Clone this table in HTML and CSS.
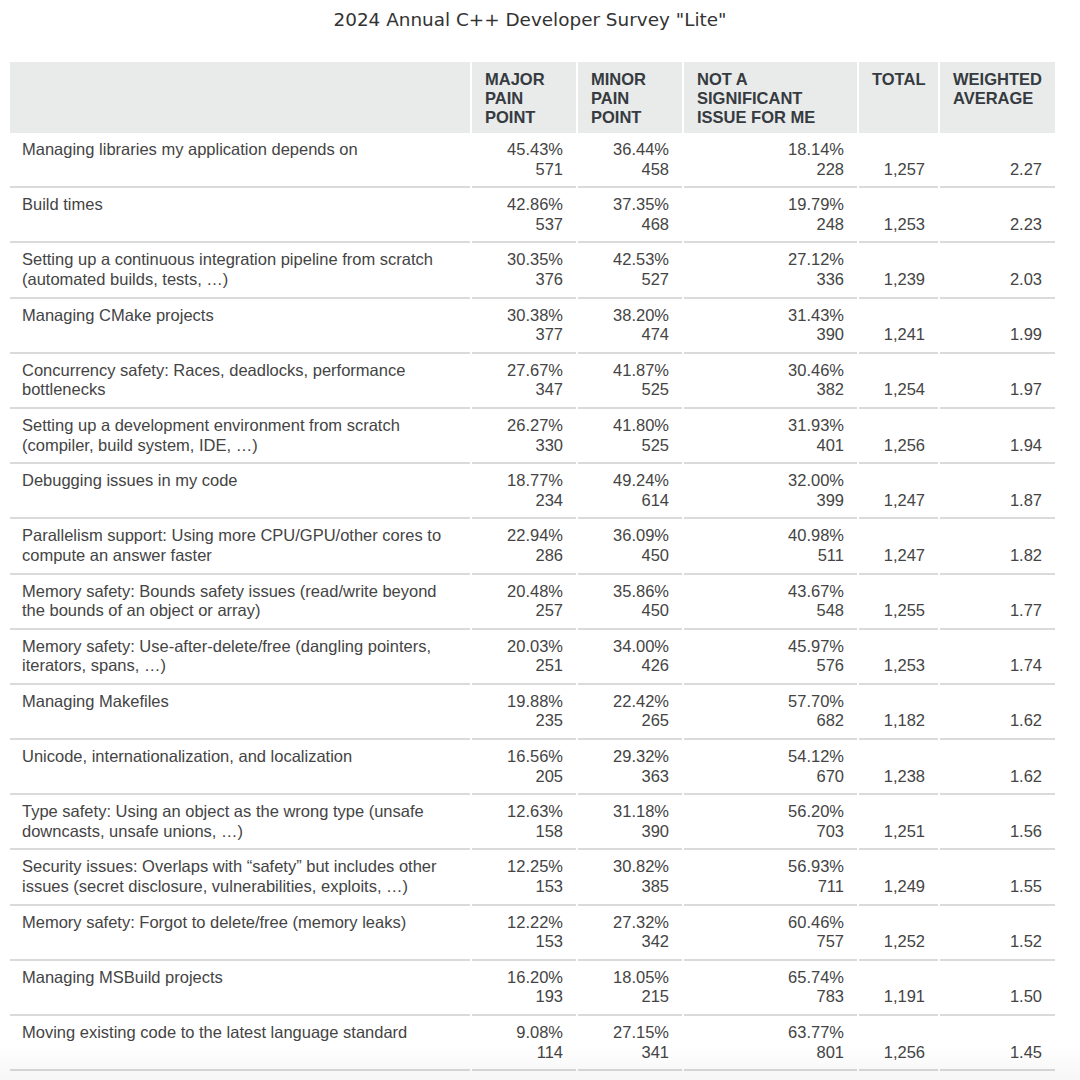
FILE: index.html
```html
<!DOCTYPE html>
<html lang="en">
<head>
<meta charset="utf-8">
<title>2024 Annual C++ Developer Survey "Lite"</title>
<link rel="stylesheet" href="styles.css">
</head>
<body>
<div class="title">2024 Annual C++ Developer Survey "Lite"</div>
<table class="survey">
  <colgroup>
    <col class="c-label">
    <col class="c-major">
    <col class="c-minor">
    <col class="c-not">
    <col class="c-total">
    <col class="c-avg">
  </colgroup>
  <thead>
    <tr>
      <th></th>
      <th>MAJOR PAIN POINT</th>
      <th>MINOR PAIN POINT</th>
      <th>NOT A SIGNIFICANT ISSUE FOR ME</th>
      <th>TOTAL</th>
      <th>WEIGHTED AVERAGE</th>
    </tr>
  </thead>
  <tbody>
    <tr><td class="label">Managing libraries my application depends on</td><td class="num"><span>45.43%</span><span>571</span></td><td class="num"><span>36.44%</span><span>458</span></td><td class="num"><span>18.14%</span><span>228</span></td><td class="tot">1,257</td><td class="tot">2.27</td></tr>
    <tr><td class="label">Build times</td><td class="num"><span>42.86%</span><span>537</span></td><td class="num"><span>37.35%</span><span>468</span></td><td class="num"><span>19.79%</span><span>248</span></td><td class="tot">1,253</td><td class="tot">2.23</td></tr>
    <tr><td class="label">Setting up a continuous integration pipeline from scratch (automated builds, tests, …)</td><td class="num"><span>30.35%</span><span>376</span></td><td class="num"><span>42.53%</span><span>527</span></td><td class="num"><span>27.12%</span><span>336</span></td><td class="tot">1,239</td><td class="tot">2.03</td></tr>
    <tr><td class="label">Managing CMake projects</td><td class="num"><span>30.38%</span><span>377</span></td><td class="num"><span>38.20%</span><span>474</span></td><td class="num"><span>31.43%</span><span>390</span></td><td class="tot">1,241</td><td class="tot">1.99</td></tr>
    <tr><td class="label">Concurrency safety: Races, deadlocks, performance bottlenecks</td><td class="num"><span>27.67%</span><span>347</span></td><td class="num"><span>41.87%</span><span>525</span></td><td class="num"><span>30.46%</span><span>382</span></td><td class="tot">1,254</td><td class="tot">1.97</td></tr>
    <tr><td class="label">Setting up a development environment from scratch (compiler, build system, IDE, …)</td><td class="num"><span>26.27%</span><span>330</span></td><td class="num"><span>41.80%</span><span>525</span></td><td class="num"><span>31.93%</span><span>401</span></td><td class="tot">1,256</td><td class="tot">1.94</td></tr>
    <tr><td class="label">Debugging issues in my code</td><td class="num"><span>18.77%</span><span>234</span></td><td class="num"><span>49.24%</span><span>614</span></td><td class="num"><span>32.00%</span><span>399</span></td><td class="tot">1,247</td><td class="tot">1.87</td></tr>
    <tr><td class="label">Parallelism support: Using more CPU/GPU/other cores to compute an answer faster</td><td class="num"><span>22.94%</span><span>286</span></td><td class="num"><span>36.09%</span><span>450</span></td><td class="num"><span>40.98%</span><span>511</span></td><td class="tot">1,247</td><td class="tot">1.82</td></tr>
    <tr><td class="label">Memory safety: Bounds safety issues (read/write beyond the bounds of an object or array)</td><td class="num"><span>20.48%</span><span>257</span></td><td class="num"><span>35.86%</span><span>450</span></td><td class="num"><span>43.67%</span><span>548</span></td><td class="tot">1,255</td><td class="tot">1.77</td></tr>
    <tr><td class="label">Memory safety: Use-after-delete/free (dangling pointers, iterators, spans, …)</td><td class="num"><span>20.03%</span><span>251</span></td><td class="num"><span>34.00%</span><span>426</span></td><td class="num"><span>45.97%</span><span>576</span></td><td class="tot">1,253</td><td class="tot">1.74</td></tr>
    <tr><td class="label">Managing Makefiles</td><td class="num"><span>19.88%</span><span>235</span></td><td class="num"><span>22.42%</span><span>265</span></td><td class="num"><span>57.70%</span><span>682</span></td><td class="tot">1,182</td><td class="tot">1.62</td></tr>
    <tr><td class="label">Unicode, internationalization, and localization</td><td class="num"><span>16.56%</span><span>205</span></td><td class="num"><span>29.32%</span><span>363</span></td><td class="num"><span>54.12%</span><span>670</span></td><td class="tot">1,238</td><td class="tot">1.62</td></tr>
    <tr><td class="label">Type safety: Using an object as the wrong type (unsafe downcasts, unsafe unions, …)</td><td class="num"><span>12.63%</span><span>158</span></td><td class="num"><span>31.18%</span><span>390</span></td><td class="num"><span>56.20%</span><span>703</span></td><td class="tot">1,251</td><td class="tot">1.56</td></tr>
    <tr><td class="label">Security issues: Overlaps with “safety” but includes other issues (secret disclosure, vulnerabilities, exploits, …)</td><td class="num"><span>12.25%</span><span>153</span></td><td class="num"><span>30.82%</span><span>385</span></td><td class="num"><span>56.93%</span><span>711</span></td><td class="tot">1,249</td><td class="tot">1.55</td></tr>
    <tr><td class="label">Memory safety: Forgot to delete/free (memory leaks)</td><td class="num"><span>12.22%</span><span>153</span></td><td class="num"><span>27.32%</span><span>342</span></td><td class="num"><span>60.46%</span><span>757</span></td><td class="tot">1,252</td><td class="tot">1.52</td></tr>
    <tr><td class="label">Managing MSBuild projects</td><td class="num"><span>16.20%</span><span>193</span></td><td class="num"><span>18.05%</span><span>215</span></td><td class="num"><span>65.74%</span><span>783</span></td><td class="tot">1,191</td><td class="tot">1.50</td></tr>
    <tr><td class="label">Moving existing code to the latest language standard</td><td class="num"><span>9.08%</span><span>114</span></td><td class="num"><span>27.15%</span><span>341</span></td><td class="num"><span>63.77%</span><span>801</span></td><td class="tot">1,256</td><td class="tot">1.45</td></tr>
  </tbody>
</table>
<div class="fade"></div>
</body>
</html>
```

FILE: styles.css
```css
html, body {
  background: #ffffff;
}

body {
  margin: 8px;
  font-family: "Liberation Sans", Arial, sans-serif;
  color: #444444;
  overflow: hidden;
}

.title {
  font-family: "DejaVu Sans", sans-serif;
  font-size: 18.4px;
  line-height: 24px;
  height: 24px;
  width: 1044px;
  color: #333333;
  text-align: center;
  margin-bottom: 28px;
}

.survey {
  table-layout: fixed;
  width: 1049px;
  border-collapse: separate;
  border-spacing: 2px;
  font-size: 16.5px;
}

.c-label { width: 460px; }
.c-major { width: 104px; }
.c-minor { width: 104px; }
.c-not { width: 173px; }
.c-total { width: 79px; }
.c-avg { width: 115px; }

.survey th {
  background: #e9eaea;
  color: #353b40;
  font-weight: bold;
  text-align: left;
  vertical-align: top;
  line-height: 19px;
  padding: 8px 10px 6px 13px;
  height: 57px;
}

.survey td {
  border-bottom: 2px solid #dadada;
  line-height: 19.6px;
  padding: 5px 13px 7px 12px;
  height: 39.2px;
}

.survey td.label {
  vertical-align: top;
}

.survey td.num {
  vertical-align: top;
  text-align: right;
}

.survey td.num span {
  display: block;
}

.survey td.tot {
  vertical-align: bottom;
  text-align: right;
}

.fade {
  position: fixed;
  left: 0;
  right: 0;
  bottom: 0;
  height: 34px;
  background: linear-gradient(to bottom, rgba(0, 0, 0, 0), rgba(0, 0, 0, 0.035));
  pointer-events: none;
}
```
